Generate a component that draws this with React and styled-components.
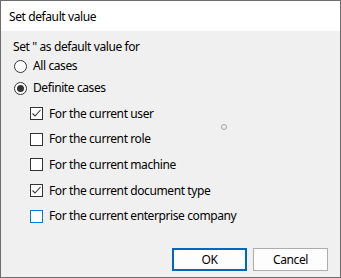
import React from "react";
import styled, { createGlobalStyle } from "styled-components";

const Global = createGlobalStyle`
  html, body { margin: 0; padding: 0; background: #f0f0f0; }
  body { font-family: "Noto Sans", "Open Sans", sans-serif; font-size: 12px; color: #000; letter-spacing: -0.4px; }
  * { box-sizing: border-box; }
`;

const Window = styled.div`
  width: 341px;
  height: 278px;
  border: 1px solid #6d6d6d;
  display: flex;
  flex-direction: column;
  background: #f0f0f0;
`;

const TitleBar = styled.div`
  height: 30px;
  background: #fff;
  display: flex;
  align-items: center;
  padding-left: 8px;
  font-size: 12px;
  flex-shrink: 0;
`;

const Body = styled.div`
  position: relative;
  flex: 1;
  display: flex;
  flex-direction: column;
  padding: 8px 12px 6px 12px;
`;

const Prompt = styled.div`
  line-height: 16px;
  height: 16px;
`;

const OptionRow = styled.label`
  display: flex;
  align-items: center;
  gap: 6px;
  height: ${(p) => p.$h}px;
  padding-left: ${(p) => p.$indent || 1}px;
  line-height: 16px;
  white-space: nowrap;
`;

const RadioCircle = styled.span`
  width: 13px;
  height: 13px;
  border-radius: 50%;
  border: 1px solid #333;
  background: #fff;
  display: flex;
  align-items: center;
  justify-content: center;
  flex-shrink: 0;
  &::after {
    content: "";
    width: 7px;
    height: 7px;
    border-radius: 50%;
    background: #333;
    display: ${(p) => (p.$checked ? "block" : "none")};
  }
`;

const CheckList = styled.div`
  display: flex;
  flex-direction: column;
  padding-top: 2px;
`;

const CheckBox = styled.span`
  width: 13px;
  height: 13px;
  border: 1px solid ${(p) => (p.$focus ? "#0078d7" : "#333")};
  background: #fff;
  display: flex;
  align-items: center;
  justify-content: center;
  flex-shrink: 0;
`;

const Footer = styled.div`
  margin-top: auto;
  display: flex;
  justify-content: flex-end;
  gap: 6px;
`;

const Button = styled.button`
  width: 75px;
  height: 23px;
  font-family: inherit;
  font-size: 12px;
  letter-spacing: inherit;
  color: #000;
  background: #fdfdfd;
  border: ${(p) => (p.$default ? "2px solid #0067c0" : "1px solid #adadad")};
  padding: 0;
  margin: 0;
`;

const CursorRing = styled.span`
  position: absolute;
  left: 220px;
  top: 93px;
  width: 6px;
  height: 6px;
  border-radius: 50%;
  border: 1px solid #a0a0a0;
`;

const Check = () => (
  <svg width="11" height="11" viewBox="0 0 11 11">
    <path d="M1.5 5.5 L4 8 L9.5 2" fill="none" stroke="#333" strokeWidth="1.1" />
  </svg>
);

const checks = [
  { label: "For the current user", checked: true },
  { label: "For the current role" },
  { label: "For the current machine" },
  { label: "For the current document type", checked: true },
  { label: "For the current enterprise company", focus: true },
];

export default function App() {
  return (
    <>
      <Global />
      <Window>
        <TitleBar>Set default value</TitleBar>
        <Body>
          <Prompt>Set '' as default value for</Prompt>
          <OptionRow $h={22}>
            <RadioCircle />
            All cases
          </OptionRow>
          <OptionRow $h={22}>
            <RadioCircle $checked />
            Definite cases
          </OptionRow>
          <CheckList>
            {checks.map((c) => (
              <OptionRow key={c.label} $h={25.6} $indent={17}>
                <CheckBox $focus={c.focus}>{c.checked && <Check />}</CheckBox>
                {c.label}
              </OptionRow>
            ))}
          </CheckList>
          <Footer>
            <Button $default>OK</Button>
            <Button>Cancel</Button>
          </Footer>
          <CursorRing />
        </Body>
      </Window>
    </>
  );
}
